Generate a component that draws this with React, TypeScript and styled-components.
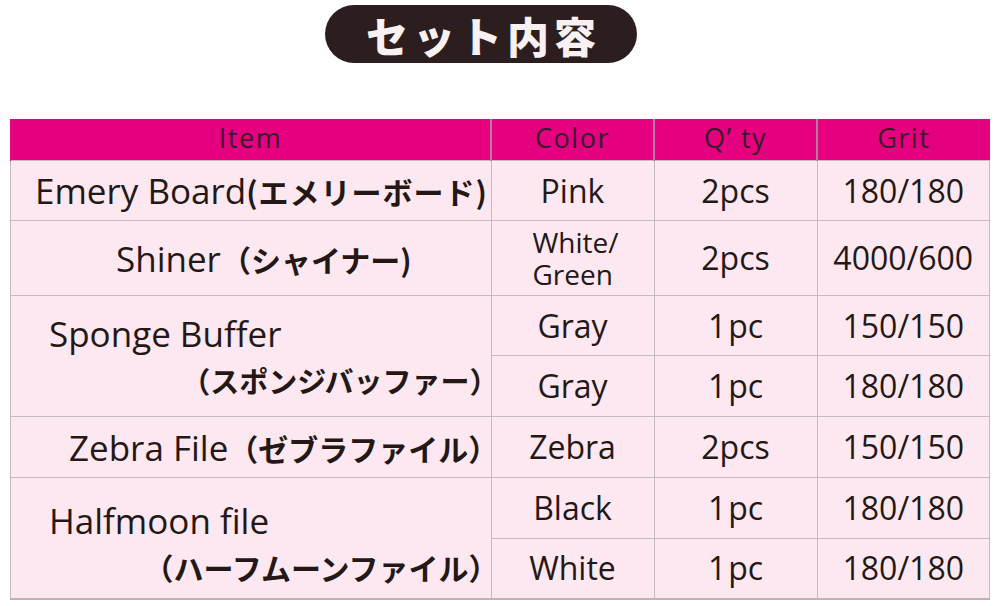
import React from "react";
import styled, { createGlobalStyle } from "styled-components";

const Global = createGlobalStyle`
  html, body { margin: 0; padding: 0; background: #ffffff; }
  body { font-family: "Open Sans", "Noto Sans CJK JP", sans-serif; color: #231815; }
`;

const Page = styled.div`
  width: 1000px;
  height: 606px;
  overflow: hidden;
  padding-top: 5px;
  box-sizing: border-box;
`;

const TitleRow = styled.div`
  display: flex;
  padding-left: 325px;
`;

const TitlePill = styled.div`
  width: 312px;
  height: 58px;
  border-radius: 29px;
  background: #2c1e1e;
  color: #f8f1f4;
  display: flex;
  align-items: center;
  justify-content: center;
  font-family: "Noto Sans CJK JP", sans-serif;
  font-weight: 900;
  font-size: 42px;
  letter-spacing: 5px;
  padding-left: 5px;
  box-sizing: border-box;
`;

const Table = styled.table`
  margin: 56px 0 0 10px;
  width: 980px;
  border-collapse: collapse;
  table-layout: fixed;
  background: #fde7f0;
  border-bottom: 2px solid #bdb3b7;
`;

const HeadCell = styled.th<{ $w?: number }>`
  width: ${(p) => (p.$w ? `${p.$w}px` : "auto")};
  height: 37px;
  padding: 0 0 4px 0;
  background: #e5007f;
  border-left: 2px solid #b97aa8;
  font-family: "Open Sans", sans-serif;
  font-weight: 400;
  font-size: 27px;
  letter-spacing: 1.5px;
  color: #3a1b2b;
  text-align: center;
  vertical-align: middle;
  line-height: 1;
  &:first-child { border-left: 1px solid #e5007f; }
`;

const Row = styled.tr<{ $h: number }>`
  height: ${(p) => p.$h}px;
`;

const Cell = styled.td`
  padding: 0;
  border: 1px solid #c5bbbf;
  text-align: center;
  vertical-align: middle;
  font-family: "Open Sans", sans-serif;
  font-size: 32px;
  color: #231815;
  line-height: 1;
`;

const ItemCell = styled(Cell)<{ $pl: number }>`
  text-align: left;
  padding-left: ${(p) => p.$pl}px;
  white-space: nowrap;
`;

const En = styled.span`
  font-family: "Open Sans", sans-serif;
  font-size: 35px;
`;

const Jp = styled.span<{ $ls?: number; $size?: number }>`
  font-family: "Noto Sans CJK JP", sans-serif;
  font-weight: 700;
  font-size: ${(p) => p.$size ?? 30}px;
  letter-spacing: ${(p) => p.$ls ?? 0}px;
`;

const Lines = styled.div<{ $top?: number }>`
  display: flex;
  flex-direction: column;
  gap: 14px;
  padding-top: ${(p) => p.$top ?? 0}px;
`;

const LineLeft = styled.div`
  text-align: left;
`;

const LineRight = styled.div`
  text-align: right;
  margin-right: -8px;
`;

const Stack = styled.div`
  display: inline-block;
  text-align: left;
  font-size: 28px;
  line-height: 32px;
  padding-left: 6px;
`;

const One = styled.span`
  margin-right: 2px;
`;

const head: { label: string; w?: number }[] = [
  { label: "Item", w: 479 },
  { label: "Color", w: 161 },
  { label: "Q’ ty", w: 161 },
  { label: "Grit" },
];

const Pc = () => (
  <>
    <One>1</One>pc
  </>
);

export default function App() {
  return (
    <Page>
      <Global />
      <TitleRow>
        <TitlePill>セット内容</TitlePill>
      </TitleRow>
      <Table>
        <thead>
          <tr>
            {head.map((h) => (
              <HeadCell key={h.label} $w={h.w}>
                {h.label}
              </HeadCell>
            ))}
          </tr>
        </thead>
        <tbody>
          <Row $h={60}>
            <ItemCell $pl={24}>
              <En>Emery Board</En>
              <Jp $ls={1}>(エメリーボード)</Jp>
            </ItemCell>
            <Cell>Pink</Cell>
            <Cell>2pcs</Cell>
            <Cell>180/180</Cell>
          </Row>
          <Row $h={75}>
            <ItemCell $pl={105}>
              <En>Shiner</En>
              <Jp>（シャイナー)</Jp>
            </ItemCell>
            <Cell>
              <Stack>
                White/
                <br />
                Green
              </Stack>
            </Cell>
            <Cell>2pcs</Cell>
            <Cell>4000/600</Cell>
          </Row>
          <Row $h={60}>
            <ItemCell $pl={38} rowSpan={2}>
              <Lines>
                <LineLeft>
                  <En>Sponge Buffer</En>
                </LineLeft>
                <LineRight>
                  <Jp $size={29}>（スポンジバッファー）</Jp>
                </LineRight>
              </Lines>
            </ItemCell>
            <Cell>Gray</Cell>
            <Cell>
              <Pc />
            </Cell>
            <Cell>150/150</Cell>
          </Row>
          <Row $h={61}>
            <Cell>Gray</Cell>
            <Cell>
              <Pc />
            </Cell>
            <Cell>180/180</Cell>
          </Row>
          <Row $h={61}>
            <ItemCell $pl={58}>
              <En>Zebra File</En>
              <Jp>（ゼブラファイル）</Jp>
            </ItemCell>
            <Cell>Zebra</Cell>
            <Cell>2pcs</Cell>
            <Cell>150/150</Cell>
          </Row>
          <Row $h={61}>
            <ItemCell $pl={38} rowSpan={2}>
              <Lines $top={12}>
                <LineLeft>
                  <En>Halfmoon file</En>
                </LineLeft>
                <LineRight>
                  <Jp>（ハーフムーンファイル）</Jp>
                </LineRight>
              </Lines>
            </ItemCell>
            <Cell>Black</Cell>
            <Cell>
              <Pc />
            </Cell>
            <Cell>180/180</Cell>
          </Row>
          <Row $h={60}>
            <Cell>White</Cell>
            <Cell>
              <Pc />
            </Cell>
            <Cell>180/180</Cell>
          </Row>
        </tbody>
      </Table>
    </Page>
  );
}
